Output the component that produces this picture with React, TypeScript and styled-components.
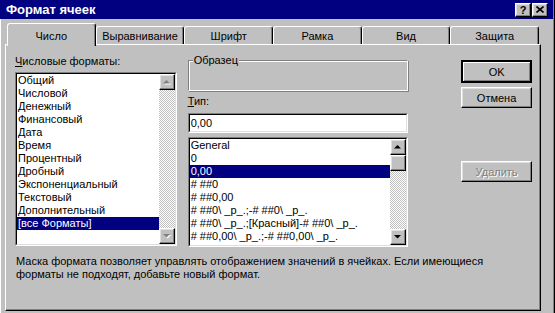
import React from 'react';
import styled, { createGlobalStyle, css } from 'styled-components';

const GlobalStyle = createGlobalStyle`
  html, body {
    margin: 0;
    padding: 0;
    background: #c0c0c0;
    overflow: hidden;
  }
  body {
    font-family: 'Liberation Sans', Arial, sans-serif;
    font-size: 11px;
    color: #000;
  }
`;

const raised = css`
  box-sizing: border-box;
  border-top: 1px solid #fff;
  border-left: 1px solid #fff;
  border-right: 1px solid #000;
  border-bottom: 1px solid #000;
  box-shadow: inset -1px -1px 0 #808080, inset 1px 1px 0 #dfdfdf;
  background: #c0c0c0;
`;

const dither = css`
  background-color: #c0c0c0;
  background-image: repeating-conic-gradient(#c0c0c0 0 25%, #ffffff 0 50%);
  background-size: 2px 2px;
`;

const Window = styled.div`
  width: 555px;
  height: 313px;
  box-sizing: border-box;
  background: #c0c0c0;
  border-right: 1px solid #000;
  box-shadow: inset -1px 0 0 #808080, inset 1px 0 0 #fff;
  display: flex;
  flex-direction: column;
`;

const TitleBar = styled.div`
  height: 19px;
  margin-right: 1px;
  background: #000080;
  color: #fff;
  display: flex;
  align-items: center;
  padding: 0 5px 0 6px;
  font-weight: bold;
  font-size: 13px;
`;

const Title = styled.div`
  flex: 1;
`;

const CaptionButtons = styled.div`
  display: flex;
  gap: 1px;
`;

const CaptionButton = styled.div`
  ${raised};
  width: 16px;
  height: 14px;
  display: flex;
  align-items: center;
  justify-content: center;
  color: #000;
  font-size: 11px;
  font-weight: bold;
  line-height: 12px;
`;

const Body = styled.div`
  flex: 1;
  display: flex;
  flex-direction: column;
  padding: 4px 13px 2px 5px;
`;

const TabRow = styled.div`
  display: flex;
  align-items: flex-end;
  height: 23px;
  padding: 0 2px;
  margin-bottom: -2px;
  position: relative;
  z-index: 1;
`;

const Tab = styled.div<{ $active?: boolean }>`
  flex: 1;
  box-sizing: border-box;
  background: #c0c0c0;
  border-top: 1px solid #fff;
  border-left: 1px solid #fff;
  border-right: 1px solid #000;
  border-radius: 3px 3px 0 0;
  box-shadow: inset -1px 0 0 #808080;
  text-align: center;
  line-height: 13px;
  height: ${p => (p.$active ? '23px' : '18px')};
  margin-bottom: ${p => (p.$active ? '0' : '2px')};
  padding-top: ${p => (p.$active ? '6px' : '3px')};
`;

const Panel = styled.div`
  flex: 1;
  box-sizing: border-box;
  border-top: 1px solid #fff;
  border-left: 1px solid #fff;
  border-right: 1px solid #000;
  border-bottom: 1px solid #000;
  box-shadow: inset -1px -1px 0 #808080;
  padding: 10px 8px 0 9px;
  display: flex;
  flex-direction: column;
`;

const Columns = styled.div`
  display: flex;
  align-items: flex-start;
`;

const Column = styled.div<{ $width: number; $offset?: number }>`
  width: ${p => p.$width}px;
  margin-left: ${p => p.$offset ?? 0}px;
  display: flex;
  flex-direction: column;
`;

const Label = styled.div<{ $gap?: number }>`
  line-height: 13px;
  margin-top: ${p => p.$gap ?? 0}px;
  white-space: nowrap;
  u {
    text-decoration: underline;
    text-underline-offset: 1px;
  }
`;

const Sunken = styled.div<{ $height: number; $gap: number }>`
  box-sizing: border-box;
  height: ${p => p.$height}px;
  margin-top: ${p => p.$gap}px;
  border-top: 1px solid #808080;
  border-left: 1px solid #808080;
  border-right: 1px solid #fff;
  border-bottom: 1px solid #fff;
`;

const SunkenInner = styled.div`
  box-sizing: border-box;
  height: 100%;
  background: #fff;
  border-top: 1px solid #000;
  border-left: 1px solid #000;
  border-right: 1px solid #dfdfdf;
  border-bottom: 1px solid #dfdfdf;
  display: flex;
  overflow: hidden;
`;

const Items = styled.div`
  flex: 1;
  min-width: 0;
  display: flex;
  flex-direction: column;
`;

const Item = styled.div<{ $selected?: boolean }>`
  height: 13px;
  line-height: 13px;
  padding-left: 1px;
  white-space: nowrap;
  overflow: hidden;
  background: ${p => (p.$selected ? '#000080' : 'transparent')};
  color: ${p => (p.$selected ? '#fff' : '#000')};
`;

const InputText = styled.div`
  line-height: 16px;
  padding-left: 1px;
`;

const ScrollBar = styled.div`
  width: 16px;
  display: flex;
  flex-direction: column;
  ${dither};
`;

const ScrollButton = styled.div`
  ${raised};
  width: 16px;
  height: 16px;
  display: flex;
  align-items: center;
  justify-content: center;
`;

const ScrollTrack = styled.div`
  flex: 1;
`;

const Frame = styled.div`
  position: relative;
  box-sizing: border-box;
  height: 31px;
  margin-top: 5px;
  border-top: 1px solid #808080;
  border-left: 1px solid #808080;
  border-right: 1px solid #fff;
  border-bottom: 1px solid #fff;
  box-shadow: inset 1px 1px 0 #fff, 1px 1px 0 #808080;
`;

const Legend = styled.div`
  position: absolute;
  top: -7px;
  left: 4px;
  padding: 0 1px;
  background: #c0c0c0;
  line-height: 13px;
`;

const Button = styled.div<{ $height: number; $gap: number; $default?: boolean; $disabled?: boolean }>`
  ${raised};
  height: ${p => p.$height}px;
  margin-top: ${p => p.$gap}px;
  display: flex;
  align-items: center;
  justify-content: center;
  color: ${p => (p.$disabled ? '#808080' : '#000')};
  text-shadow: ${p => (p.$disabled ? '1px 1px 0 #fff' : 'none')};
  ${p =>
    p.$default &&
    css`
      border-width: 2px;
      border-color: #000;
      box-shadow: inset 1px 1px 0 #fff, inset -1px -1px 0 #808080;
    `}
`;

const Description = styled.div`
  margin-top: 8px;
  padding-left: 1px;
  line-height: 13px;
  white-space: nowrap;
`;

const Arrow: React.FC<{ up?: boolean; disabled?: boolean }> = ({ up, disabled }) => {
  const d = up ? 'M3.5 0 L0 3.5 L7 3.5 Z' : 'M0 0 L7 0 L3.5 3.5 Z';
  return (
    <svg width="8" height="5" viewBox="0 0 8 5">
      {disabled && <path d={d} fill="#fff" transform="translate(1 1)" />}
      <path d={d} fill={disabled ? '#808080' : '#000'} />
    </svg>
  );
};

const categories = [
  'Общий',
  'Числовой',
  'Денежный',
  'Финансовый',
  'Дата',
  'Время',
  'Процентный',
  'Дробный',
  'Экспоненциальный',
  'Текстовый',
  'Дополнительный',
  '[все Форматы]',
];

const formats = [
  'General',
  '0',
  '0,00',
  '# ##0',
  '# ##0,00',
  '# ##0\\ _р_.;-# ##0\\ _р_.',
  '# ##0\\ _р_.;[Красный]-# ##0\\ _р_.',
  '# ##0,00\\ _р_.;-# ##0,00\\ _р_.',
];

const tabs = ['Число', 'Выравнивание', 'Шрифт', 'Рамка', 'Вид', 'Защита'];

const App: React.FC = () => {
  return (
    <>
      <GlobalStyle />
      <Window>
        <TitleBar>
          <Title>Формат ячеек</Title>
          <CaptionButtons>
            <CaptionButton>?</CaptionButton>
            <CaptionButton>
              <svg width="8" height="7" viewBox="0 0 8 7">
                <path d="M0.5 0.5 L7.5 6.5 M7.5 0.5 L0.5 6.5" stroke="#000" strokeWidth="1.6" />
              </svg>
            </CaptionButton>
          </CaptionButtons>
        </TitleBar>
        <Body>
          <TabRow>
            {tabs.map((t, i) => (
              <Tab key={t} $active={i === 0}>
                {t}
              </Tab>
            ))}
          </TabRow>
          <Panel>
            <Columns>
              <Column $width={162}>
                <Label>
                  <u>Ч</u>исловые форматы:
                </Label>
                <Sunken $height={174} $gap={4}>
                  <SunkenInner>
                    <Items>
                      {categories.map((c, i) => (
                        <Item key={c} $selected={i === categories.length - 1}>
                          {c}
                        </Item>
                      ))}
                    </Items>
                    <ScrollBar>
                      <ScrollButton>
                        <Arrow up disabled />
                      </ScrollButton>
                      <ScrollTrack />
                      <ScrollButton>
                        <Arrow disabled />
                      </ScrollButton>
                    </ScrollBar>
                  </SunkenInner>
                </Sunken>
              </Column>

              <Column $width={221} $offset={11}>
                <Frame>
                  <Legend>Образец</Legend>
                </Frame>
                <Label $gap={4}>
                  <u>Т</u>ип:
                </Label>
                <Sunken $height={20} $gap={5}>
                  <SunkenInner>
                    <InputText>0,00</InputText>
                  </SunkenInner>
                </Sunken>
                <Sunken $height={110} $gap={4}>
                  <SunkenInner>
                    <Items>
                      {formats.map((f, i) => (
                        <Item key={f} $selected={i === 2}>
                          {f}
                        </Item>
                      ))}
                    </Items>
                    <ScrollBar>
                      <ScrollButton>
                        <Arrow up />
                      </ScrollButton>
                      <ScrollButton />
                      <ScrollTrack />
                      <ScrollButton>
                        <Arrow />
                      </ScrollButton>
                    </ScrollBar>
                  </SunkenInner>
                </Sunken>
              </Column>

              <Column $width={71} $offset={53}>
                <Button $height={23} $gap={5} $default>
                  OK
                </Button>
                <Button $height={21} $gap={4}>
                  Отмена
                </Button>
                <Button $height={21} $gap={53} $disabled>
                  Удалить
                </Button>
              </Column>
            </Columns>
            <Description>
              Маска формата позволяет управлять отображением значений в ячейках. Если имеющиеся
              <br />
              форматы не подходят, добавьте новый формат.
            </Description>
          </Panel>
        </Body>
      </Window>
    </>
  );
};

export default App;
